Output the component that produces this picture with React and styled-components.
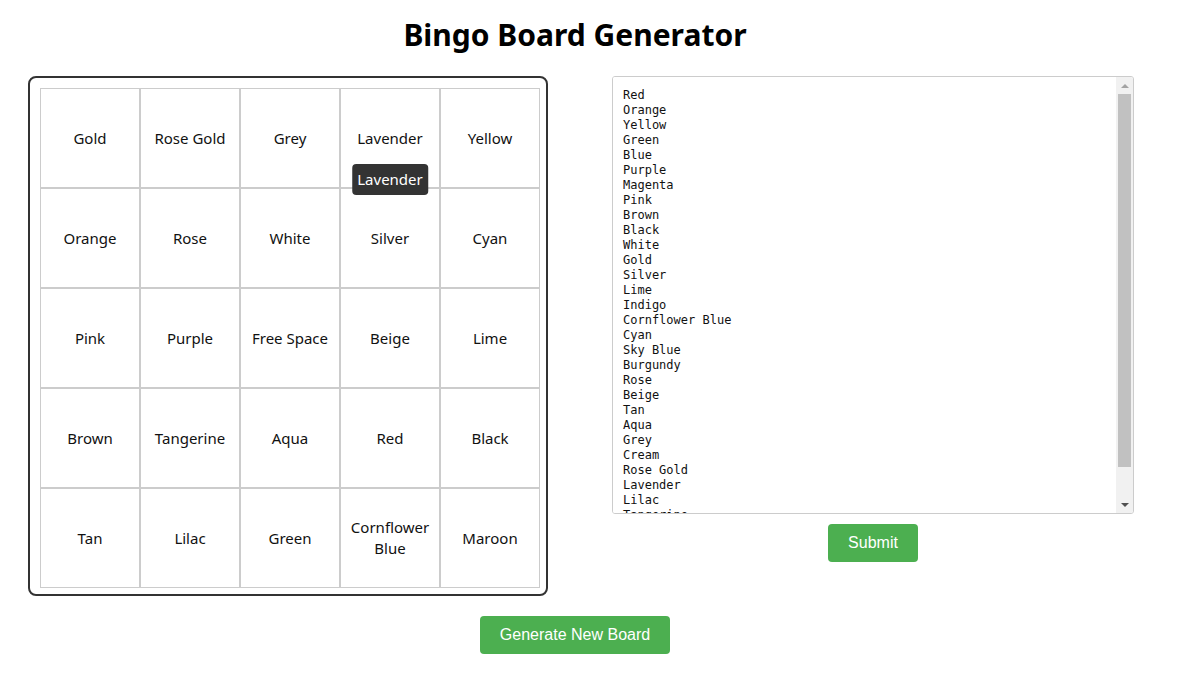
import React, { useState } from "react";
import styled, { createGlobalStyle } from "styled-components";

const BOARD = [
  ["Gold", "Rose Gold", "Grey", "Lavender", "Yellow"],
  ["Orange", "Rose", "White", "Silver", "Cyan"],
  ["Pink", "Purple", "Free Space", "Beige", "Lime"],
  ["Brown", "Tangerine", "Aqua", "Red", "Black"],
  ["Tan", "Lilac", "Green", "Cornflower Blue", "Maroon"],
];

const COLOURS = [
  "Red", "Orange", "Yellow", "Green", "Blue", "Purple", "Magenta", "Pink",
  "Brown", "Black", "White", "Gold", "Silver", "Lime", "Indigo",
  "Cornflower Blue", "Cyan", "Sky Blue", "Burgundy", "Rose", "Beige", "Tan",
  "Aqua", "Grey", "Cream", "Rose Gold", "Lavender", "Lilac", "Tangerine",
  "Maroon",
];

const GlobalStyle = createGlobalStyle`
  body {
    margin: 0;
    font-family: "Noto Sans", "Open Sans", sans-serif;
    background: #fff;
    color: #000;
  }
`;

const Page = styled.div`
  width: 1150px;
  display: flex;
  flex-direction: column;
  align-items: center;
`;

const Title = styled.h1`
  margin: 16px 0 22px;
  font-size: 30px;
  font-weight: 700;
  line-height: 38px;
`;

const Row = styled.div`
  align-self: stretch;
  display: flex;
  align-items: flex-start;
  gap: 64px;
  padding-left: 28px;
`;

const Board = styled.div`
  box-sizing: border-box;
  width: 520px;
  height: 520px;
  padding: 10px 6px 6px 10px;
  border: 2px solid #333;
  border-radius: 8px;
`;

const Grid = styled.div`
  display: grid;
  grid-template-columns: repeat(5, 100px);
  grid-auto-rows: 100px;
`;

const Cell = styled.div`
  position: relative;
  box-sizing: border-box;
  border: 1px solid #ccc;
  display: flex;
  align-items: center;
  justify-content: center;
  text-align: center;
  padding: 0 8px;
  font-size: 15px;
  line-height: 21px;
  color: #111;
  cursor: pointer;
`;

const Tooltip = styled.span`
  position: absolute;
  left: 50%;
  top: 75px;
  transform: translateX(-50%);
  background: #333;
  color: #fff;
  border-radius: 4px;
  padding: 5px;
  font-size: 15px;
  line-height: 21px;
  white-space: nowrap;
  z-index: 2;
`;

const Side = styled.div`
  width: 522px;
  display: flex;
  flex-direction: column;
  align-items: center;
  gap: 10px;
`;

const InputFrame = styled.div`
  box-sizing: border-box;
  width: 522px;
  height: 438px;
  display: flex;
  border: 1px solid #ccc;
  border-radius: 3px;
  overflow: hidden;
`;

const ListInput = styled.textarea`
  flex: 1;
  padding: 11px 10px;
  border: none;
  font-family: "DejaVu Sans Mono", "Liberation Mono", monospace;
  font-size: 12px;
  line-height: 15px;
  color: #111;
  resize: none;
  outline: none;
  overflow: hidden;
`;

const ScrollTrack = styled.div`
  width: 17px;
  display: flex;
  flex-direction: column;
  background: #f1f1f1;
`;

const ScrollArrow = styled.div`
  height: 17px;
  flex-shrink: 0;
  display: flex;
  align-items: center;
  justify-content: center;
  margin-top: ${(p) => (p.$down ? "auto" : "0")};

  &::before {
    content: "";
    width: 0;
    height: 0;
    border-left: 4px solid transparent;
    border-right: 4px solid transparent;
    ${(p) =>
      p.$down
        ? "border-top: 4px solid #505050;"
        : "border-bottom: 4px solid #a3a3a3;"}
  }
`;

const ScrollThumb = styled.div`
  height: 373px;
  margin: 0 2px;
  background: #c1c1c1;
`;

const Button = styled.button`
  background: #4caf50;
  color: #fff;
  border: none;
  border-radius: 4px;
  padding: 0 20px;
  height: 38px;
  font-family: "Liberation Sans", Arial, sans-serif;
  font-size: 16px;
  cursor: pointer;
`;

const Footer = styled.div`
  margin-top: 20px;
`;

export default function App() {
  const [hover, setHover] = useState("Lavender");
  const [list, setList] = useState(COLOURS.join("\n"));

  return (
    <>
      <GlobalStyle />
      <Page>
        <Title>Bingo Board Generator</Title>
        <Row>
          <Board>
            <Grid>
              {BOARD.flat().map((item) => (
                <Cell key={item} onMouseEnter={() => setHover(item)}>
                  {item}
                  {hover === item && <Tooltip>{item}</Tooltip>}
                </Cell>
              ))}
            </Grid>
          </Board>
          <Side>
            <InputFrame>
              <ListInput value={list} onChange={(e) => setList(e.target.value)} />
              <ScrollTrack>
                <ScrollArrow />
                <ScrollThumb />
                <ScrollArrow $down />
              </ScrollTrack>
            </InputFrame>
            <Button>Submit</Button>
          </Side>
        </Row>
        <Footer>
          <Button>Generate New Board</Button>
        </Footer>
      </Page>
    </>
  );
}
